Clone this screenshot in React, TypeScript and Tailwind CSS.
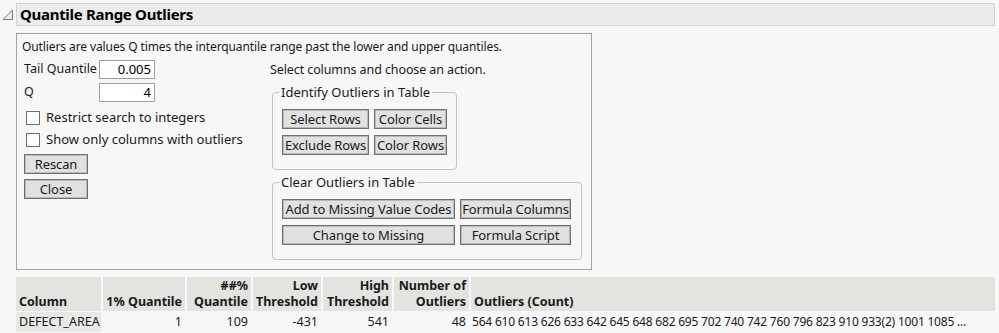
import React from 'react';

const font = { fontFamily: '"Noto Sans", "Open Sans", sans-serif' };

const Btn = ({ label, w }: { label: string; w: string }) => (
  <button
    className={`${w} h-[20px] flex items-center justify-center bg-[#e1e1e1] border border-[#6f6f6f] shadow-[inset_0_0_0_1px_#b9b9b9] text-[13px] leading-none text-[#1a1a1a] whitespace-nowrap tracking-[-0.1px]`}
  >
    {label}
  </button>
);

const Check = ({ label }: { label: string }) => (
  <div className="flex items-center gap-[6px] h-[22px]">
    <div className="w-[14px] h-[14px] bg-white border border-[#6f6f6f]" />
    <span className="text-[13px] text-[#1a1a1a]">{label}</span>
  </div>
);

const Group = ({ title, w, children }: { title: string; w: string; children: React.ReactNode }) => (
  <div className={`${w} relative border border-[#c4c4c4] rounded-[4px] pt-[16px] pb-[14px] pl-[9px]`}>
    <span className="absolute -top-[10px] left-[6px] px-[2px] bg-[#f7f7f7] text-[13px] text-[#1a1a1a] leading-[18px]">
      {title}
    </span>
    {children}
  </div>
);

const Head = ({ lines, left }: { lines: string[]; left?: boolean }) => (
  <div className={`bg-[#e3e3df] flex flex-col justify-end pb-[1px] px-[3px] font-bold text-[12.5px] leading-[16px] text-[#1a1a1a] ${left ? 'items-start' : 'items-end'}`}>
    {lines.map((l) => (
      <span key={l} className="whitespace-nowrap">{l}</span>
    ))}
  </div>
);

const Cell = ({ v }: { v: string }) => (
  <div className="flex items-center justify-end px-[3px] text-[12.5px] text-[#1a1a1a]">{v}</div>
);

export default function App() {
  return (
    <div className="w-[999px] h-[333px] bg-[#f7f7f7] overflow-hidden" style={font}>
      {/* Title bar */}
      <div className="flex items-center pt-[3px] pr-[4px]">
        <div className="w-[16px] flex justify-center pt-[1px]">
          <svg width="12" height="12" viewBox="0 0 12 12">
            <path d="M10.5 1 L10.5 10.5 L1 10.5 Z" fill="#ececec" stroke="#7a7a7a" strokeWidth="1" />
          </svg>
        </div>
        <div className="flex-1 h-[23px] bg-[#ebebeb] border border-[#d2d2d2] flex items-center pl-[3px]">
          <span className="font-bold text-[15px] tracking-[-0.3px] text-black leading-none">Quantile Range Outliers</span>
        </div>
      </div>

      {/* Panel */}
      <div className="ml-[16px] mt-[7px] w-[576px] h-[237px] border border-[#a3a3a3] pl-[5px] pt-[5px]">
        <div className="text-[12px] tracking-[-0.1px] text-[#1a1a1a] leading-[16px]">
          Outliers are values Q times the interquantile range past the lower and upper quantiles.
        </div>
        <div className="flex">
          {/* Left column */}
          <div className="w-[248px] pl-[2px] pt-[5px]">
            <div className="flex flex-col gap-[4px]">
              <div className="flex items-center h-[19px]">
                <span className="w-[75px] text-[12.5px] text-[#1a1a1a]">Tail Quantile</span>
                <div className="w-[56px] h-[19px] bg-white border border-[#a0a0a0] flex items-center justify-end pr-[3px] text-[13px]">0.005</div>
              </div>
              <div className="flex items-center h-[19px]">
                <span className="w-[75px] text-[12.5px] text-[#1a1a1a]">Q</span>
                <div className="w-[56px] h-[19px] bg-white border border-[#a0a0a0] flex items-center justify-end pr-[3px] text-[13px]">4</div>
              </div>
            </div>
            <div className="pl-[2px] mt-[5px]">
              <Check label="Restrict search to integers" />
              <Check label="Show only columns with outliers" />
            </div>
            <div className="flex flex-col gap-[5px] mt-[3px]">
              <Btn label="Rescan" w="w-[64px]" />
              <Btn label="Close" w="w-[64px]" />
            </div>
          </div>

          {/* Right column */}
          <div className="pt-[7px]">
            <div className="text-[12.5px] text-[#1a1a1a] leading-[16px] tracking-[-0.1px]">Select columns and choose an action.</div>
            <div className="pl-[2px] mt-[14px] flex flex-col gap-[12px]">
              <Group title="Identify Outliers in Table" w="w-[185px]">
                <div className="grid grid-cols-[87px_73px] gap-x-[5px] gap-y-[6px]">
                  <Btn label="Select Rows" w="w-[87px]" />
                  <Btn label="Color Cells" w="w-[73px]" />
                  <Btn label="Exclude Rows" w="w-[87px]" />
                  <Btn label="Color Rows" w="w-[73px]" />
                </div>
              </Group>
              <Group title="Clear Outliers in Table" w="w-[310px]">
                <div className="grid grid-cols-[173px_111px] gap-x-[5px] gap-y-[6px]">
                  <Btn label="Add to Missing Value Codes" w="w-[173px]" />
                  <Btn label="Formula Columns" w="w-[111px]" />
                  <Btn label="Change to Missing" w="w-[173px]" />
                  <Btn label="Formula Script" w="w-[111px]" />
                </div>
              </Group>
            </div>
          </div>
        </div>
      </div>

      {/* Table */}
      <div className="ml-[16px] mt-[7px] mr-[4px] grid grid-cols-[85px_82px_64px_68px_69px_75px_1fr] gap-x-[2px] gap-y-[1px] grid-rows-[34px_20px]">
        <Head lines={['Column']} left />
        <Head lines={['1% Quantile']} />
        <Head lines={['##%', 'Quantile']} />
        <Head lines={['Low', 'Threshold']} />
        <Head lines={['High', 'Threshold']} />
        <Head lines={['Number of', 'Outliers']} />
        <Head lines={['Outliers (Count)']} left />
        <div className="bg-[#e8e8e6] flex items-center px-[3px] text-[12.5px] text-[#1a1a1a]">DEFECT_AREA</div>
        <Cell v="1" />
        <Cell v="109" />
        <Cell v="-431" />
        <Cell v="541" />
        <Cell v="48" />
        <div className="flex items-center pl-[1px] text-[12px] tracking-[-0.2px] text-[#1a1a1a] whitespace-nowrap">
          564 610 613 626 633 642 645 648 682 695 702 740 742 760 796 823 910 933(2) 1001 1085 ...
        </div>
      </div>
    </div>
  );
}
